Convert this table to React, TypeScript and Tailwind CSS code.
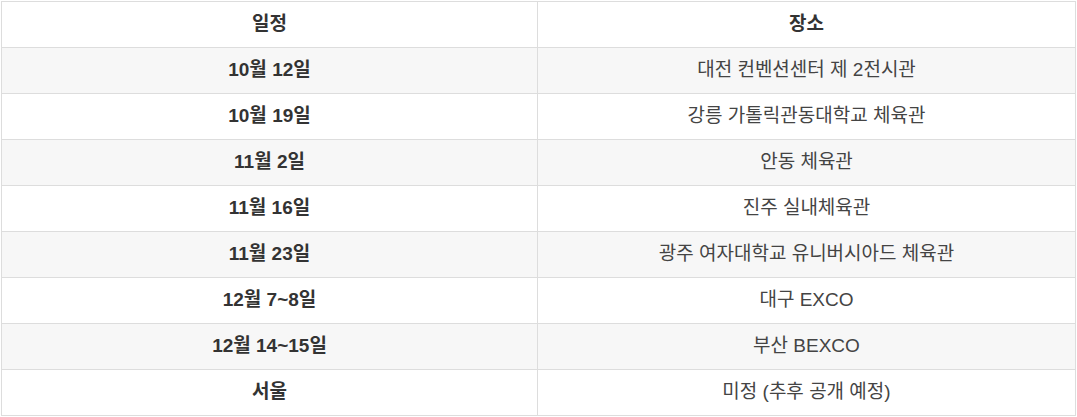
const rows = [
  { date: "10월 12일", place: "대전 컨벤션센터 제 2전시관" },
  { date: "10월 19일", place: "강릉 가톨릭관동대학교 체육관" },
  { date: "11월 2일", place: "안동 체육관" },
  { date: "11월 16일", place: "진주 실내체육관" },
  { date: "11월 23일", place: "광주 여자대학교 유니버시아드 체육관" },
  { date: "12월 7~8일", place: "대구 EXCO" },
  { date: "12월 14~15일", place: "부산 BEXCO" },
  { date: "서울", place: "미정 (추후 공개 예정)" },
];

export default function App() {
  return (
    <div className="w-[1077px] bg-white p-px font-['Liberation_Sans','Noto_Sans_CJK_KR',sans-serif] text-[19px]">
      <table className="w-[1075px] table-fixed border-collapse text-center">
        <thead>
          <tr className="h-[46px] bg-white">
            <th className="w-[536px] border border-[#dddddd] font-bold text-[#333333]">일정</th>
            <th className="border border-[#dddddd] font-bold text-[#333333]">장소</th>
          </tr>
        </thead>
        <tbody>
          {rows.map((row, i) => (
            <tr key={row.date} className={i % 2 === 0 ? "h-[46px] bg-[#f7f7f7]" : "h-[46px] bg-white"}>
              <td className="border border-[#dddddd] font-bold text-[#333333]">{row.date}</td>
              <td className="border border-[#dddddd] text-[#444444]">{row.place}</td>
            </tr>
          ))}
        </tbody>
      </table>
    </div>
  );
}
